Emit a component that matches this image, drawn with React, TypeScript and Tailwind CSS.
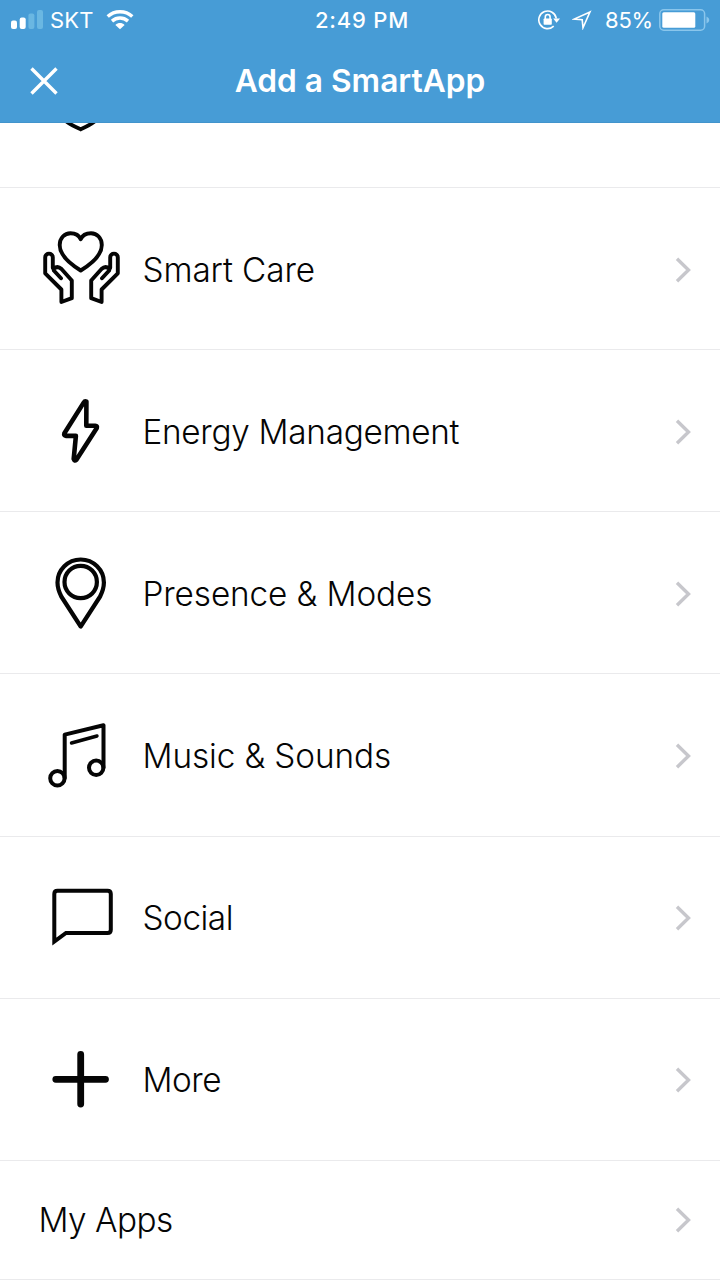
import type { ReactNode } from "react";

const INK = "#050505";

function Chevron({ className = "" }: { className?: string }) {
  return (
    <svg className={`mr-7 h-7 w-[18px] shrink-0 ${className}`} viewBox="0 0 18 28" fill="none" stroke="#c7c7cc" strokeWidth="3.4">
      <path d="M3 2.8 14.5 14 3 25.2" />
    </svg>
  );
}

function Icon({ width = 4, children }: { width?: number; children: ReactNode }) {
  return (
    <svg
      className="h-[161px] w-[142px] shrink-0"
      viewBox="0 0 142 161"
      fill="none"
      stroke={INK}
      strokeWidth={width}
      strokeLinecap="round"
      strokeLinejoin="round"
    >
      {children}
    </svg>
  );
}

function Hand() {
  return (
    <path d="M52.8 80V69.5C52.8 64.3 45.2 64.3 45.2 69.5V85.3L61.4 101.5V114L71.8 110.2V92.5L61.5 81Q57.5 77.3 53.8 80.8V82.5L61 90.3" />
  );
}

function CareIcon() {
  return (
    <Icon width={3.9}>
      <path d="M80.7 82.5C71 76.5 59.7 68 59.7 57C59.7 50 64.5 45.3 70.5 45.3C75 45.3 79 47.3 80.7 51.3C82.4 47.3 86.5 45.3 91 45.3C97 45.3 101.8 50 101.8 57C101.8 68 90.5 76.5 80.7 82.5Z" />
      <Hand />
      <g transform="translate(163 0) scale(-1 1)">
        <Hand />
      </g>
    </Icon>
  );
}

interface RowProps {
  label: string;
  icon: ReactNode;
  height?: string;
  nudge?: string;
  tracking?: string;
}

function Row({ label, icon, height = "h-[162px]", nudge = "mt-[2px]", tracking = "tracking-[-0.1px]" }: RowProps) {
  return (
    <li className={`flex items-center border-b border-[#eaeaec] ${height}`}>
      {icon}
      <span className={`flex-1 pl-[0.5px] text-[33.3px] leading-[40px] font-light ${tracking} ${nudge}`}>{label}</span>
      <Chevron className={nudge} />
    </li>
  );
}

function SignalIcon() {
  return (
    <svg className="h-5 w-8" viewBox="0 0 32 20" fill="#fff">
      <rect x="0" y="10.5" width="6" height="8.5" rx="2" />
      <rect x="8.7" y="7.5" width="6" height="11.5" rx="2" />
      <rect x="17.4" y="3.5" width="6" height="15.5" rx="2" fill="#6ab7e2" />
      <rect x="26" y="0" width="6" height="19" rx="2" fill="#6ab7e2" />
    </svg>
  );
}

function WifiIcon() {
  return (
    <svg className="h-5 w-7" viewBox="0 0 28 20" fill="none" stroke="#fff" strokeWidth="3.4">
      <path d="M1.7 6.6C8.5 .2 19.5 .2 26.3 6.6" />
      <path d="M6 11.1C10.7 7 17.3 7 22 11.1" />
      <path d="M9.4 15C12.2 12.4 15.8 12.4 18.6 15L14 19.3Z" fill="#fff" stroke="none" />
    </svg>
  );
}

function LockIcon() {
  return (
    <svg className="h-5 w-[22px]" viewBox="0 0 22 20" fill="none" stroke="#fff" strokeWidth="1.6">
      <path d="M15.7 16.2A8.8 8.8 0 1 1 18.3 8.5" />
      <path d="M15.2 8.4H22L18.6 12.8Z" fill="#fff" stroke="none" />
      <rect x="5.6" y="8.4" width="8.2" height="6.4" rx=".8" fill="#fff" stroke="none" />
      <path d="M7.3 9V6.9A2.4 2.4 0 0 1 12.1 6.9V9" />
    </svg>
  );
}

function LocationIcon() {
  return (
    <svg className="h-5 w-5" viewBox="0 0 20 20" fill="none" stroke="#fff" strokeWidth="1.6">
      <path d="M18 1.9 2.2 9.1 10.2 9.8 11 17.7Z" />
    </svg>
  );
}

function BatteryIcon() {
  return (
    <svg className="h-[22px] w-[52px]" viewBox="0 0 52 22">
      <rect x=".8" y=".8" width="44.8" height="20.4" rx="4" fill="none" stroke="#8ac6ec" strokeWidth="1.5" />
      <rect x="3.3" y="3.3" width="33" height="15.4" rx="1.5" fill="#fff" />
      <path d="M47.5 7.4Q50.3 8.8 50.3 11Q50.3 13.2 47.5 14.6Z" fill="#8ac6ec" />
    </svg>
  );
}

export default function App() {
  return (
    <div className="flex h-[1280px] w-[720px] flex-col overflow-hidden bg-white font-['Inter',sans-serif] text-[#050505]">
      <header className="h-[123px] shrink-0 border-b border-[#4294cc] bg-[#479cd6] text-white">
        <div className="grid h-10 grid-cols-[1fr_auto_1fr] items-center text-[22px] leading-[26px]">
          <div className="flex items-center pl-[11px]">
            <SignalIcon />
            <span className="ml-[7px] w-[49px] tracking-[0.2px]">SKT</span>
            <span className="ml-[7px]"><WifiIcon /></span>
          </div>
          <span className="pl-1 font-medium tracking-[0.8px]">2:49 PM</span>
          <div className="flex items-center justify-end pr-[9px]">
            <LockIcon />
            <span className="ml-3"><LocationIcon /></span>
            <span className="ml-[13px] w-[48px] whitespace-nowrap tracking-[-0.2px]">85%</span>
            <span className="ml-[6px]"><BatteryIcon /></span>
          </div>
        </div>
        <div className="grid h-[82px] grid-cols-[1fr_auto_1fr] items-center">
          <svg className="ml-[30px] h-7 w-7" viewBox="0 0 28 28" stroke="#fff" strokeWidth="3.4">
            <path d="M1.5 1.5 26.5 26.5M26.5 1.5 1.5 26.5" />
          </svg>
          <h1 className="text-[31.7px] leading-[40px] font-semibold">Add a SmartApp</h1>
        </div>
      </header>
      <ul className="flex-1">
        <li className="h-[65px] border-b border-[#eaeaec]">
          <svg className="h-16 w-[142px]" viewBox="0 0 142 64" fill="none" stroke={INK} strokeWidth="3.8">
            <path d="M66-1.8Q71 2 80.7 6.3Q90 2 95-1.8" />
          </svg>
        </li>
        <Row label="Smart Care" icon={<CareIcon />} />
        <Row
          label="Energy Management"
          tracking="tracking-[-0.28px]"
          icon={
            <Icon width={4.6}>
              <path d="M86.4 51.5Q84.8 50.8 83.7 52.6L64.4 83.2Q63.6 85.8 66 85.9H75.9L73.7 109Q74.4 111.5 76.4 109.8L96.8 78Q97.4 75.8 95.3 75.7H86.3Z" />
            </Icon>
          }
        />
        <Row
          label="Presence & Modes"
          icon={
            <Icon width={4.2}>
              <path d="M80.7 114.5 61.3 84.5C58.8 79.5 57.5 75 57.5 70.5A23.2 23 0 0 1 103.9 70.5C103.9 75 102.6 79.5 100.1 84.5Z" />
              <circle cx="80.7" cy="70" r="16.2" />
            </Icon>
          }
        />
        <Row
          label="Music & Sounds"
          height="h-[163px]"
          icon={
            <Icon width={4}>
              <circle cx="57.4" cy="103.3" r="7.2" />
              <circle cx="96.2" cy="92.8" r="7.2" />
              <path d="M64.7 103V59.6L103.5 50.2V92.5" />
              <path d="M71.5 68 97 61" strokeWidth="3.4" />
            </Icon>
          }
        />
        <Row
          label="Social"
          nudge="mt-0"
          tracking="tracking-[-0.45px]"
          icon={
            <Icon width={4}>
              <path d="M54.3 104.5V57Q54.3 53.8 57.5 53.8H107.5Q110.8 53.8 110.8 57V92.7Q110.8 96 107.5 96H66Z" strokeLinejoin="miter" />
            </Icon>
          }
        />
        <Row
          label="More"
          nudge="mt-0"
          tracking="tracking-[-0.5px]"
          icon={
            <Icon width={6.8}>
              <path d="M80.7 55.5V105M55.8 80.3H105.5" />
            </Icon>
          }
        />
        <li className="flex h-[119px] items-center border-b border-[#eaeaec] pl-[38.5px]">
          <span className="flex-1 text-[33.3px] leading-[40px] font-light tracking-[-0.5px]">My Apps</span>
          <Chevron />
        </li>
      </ul>
    </div>
  );
}
